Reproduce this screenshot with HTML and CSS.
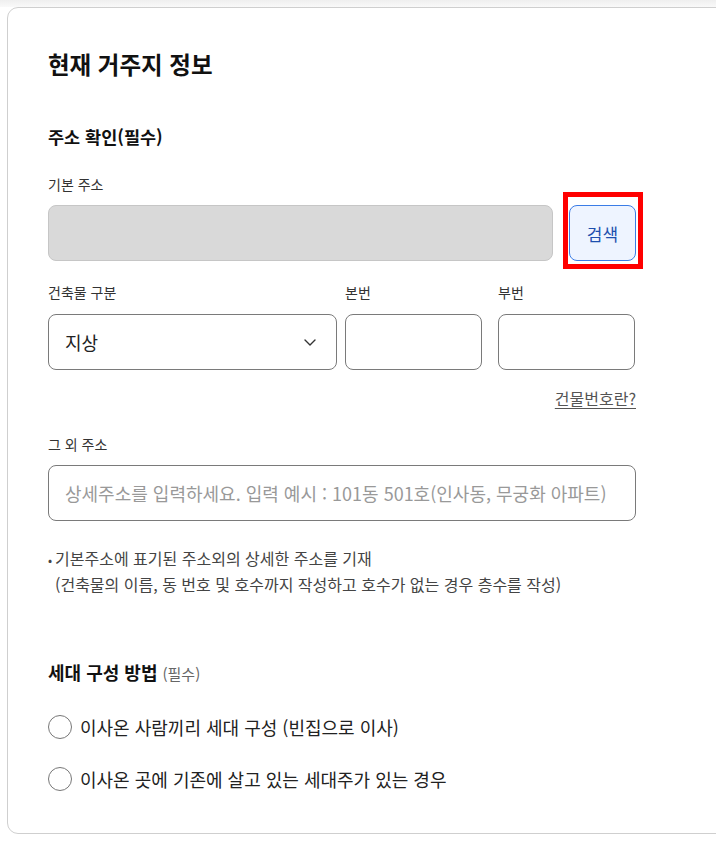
FILE: index.html
```html
<!DOCTYPE html>
<html lang="ko">
<head>
<meta charset="utf-8">
<title>현재 거주지 정보</title>
<link rel="stylesheet" href="styles.css">
</head>
<body>
<div class="page">
  <section class="card">
    <h1 class="title">현재 거주지 정보</h1>

    <h2 class="section-title">주소 확인(필수)</h2>

    <div class="field">
      <div class="label">기본 주소</div>
      <div class="addr-row">
        <div class="input input-disabled"></div>
        <div class="btn-wrap">
          <button class="btn-search" type="button">검색</button>
          <span class="highlight"></span>
        </div>
      </div>
    </div>

    <div class="field-row">
      <div class="col col-type">
        <div class="label">건축물 구분</div>
        <div class="input select">
          <span>지상</span>
          <svg class="chev" width="12" height="7" viewBox="0 0 12 7"><path d="M1 1l5 5 5-5" fill="none" stroke="#333" stroke-width="1.4" stroke-linecap="round" stroke-linejoin="round"/></svg>
        </div>
      </div>
      <div class="col col-num">
        <div class="label">본번</div>
        <div class="input"></div>
      </div>
      <div class="col col-num col-sub">
        <div class="label">부번</div>
        <div class="input"></div>
      </div>
    </div>

    <div class="link-row"><a class="help-link" href="#">건물번호란?</a></div>

    <div class="field">
      <div class="label">그 외 주소</div>
      <div class="input input-wide"><span class="placeholder">상세주소를 입력하세요. 입력 예시 : 101동 501호(인사동, 무궁화 아파트)</span></div>
    </div>

    <div class="notes">
      <p class="note"><span class="bullet">•</span>기본주소에 표기된 주소외의 상세한 주소를 기재</p>
      <p class="note note-sub">(건축물의 이름, 동 번호 및 호수까지 작성하고 호수가 없는 경우 층수를 작성)</p>
    </div>

    <h2 class="section-title section-family">세대 구성 방법 <span class="req">(필수)</span></h2>

    <div class="radios">
      <label class="radio"><span class="circle"></span><span>이사온 사람끼리 세대 구성 (빈집으로 이사)</span></label>
      <label class="radio"><span class="circle"></span><span>이사온 곳에 기존에 살고 있는 세대주가 있는 경우</span></label>
    </div>
  </section>
</div>
</body>
</html>
```

FILE: styles.css
```css
html, body {
  margin: 0;
  padding: 0;
  background: #ffffff;
  overflow: hidden;
}

body {
  font-family: "Noto Sans CJK KR", "Noto Sans", sans-serif;
  color: #111;
}

.page {
  padding: 7px 0 0 7px;
  background: linear-gradient(to bottom, #efefef 0, #f9f9f9 7px, #ffffff 7px);
  width: 800px;
}

.card {
  width: 760px;
  box-sizing: border-box;
  border: 1px solid #cfcfcf;
  border-radius: 11px;
  background: #fff;
  padding: 38px 0 42px 40px;
}

.title {
  margin: 0;
  font-size: 23.5px;
  line-height: 36px;
  font-weight: 700;
  color: #111;
}

.section-title {
  margin: 42px 0 0;
  font-size: 17.5px;
  line-height: 26px;
  font-weight: 700;
  color: #111;
}

.field {
  width: 588px;
  margin-top: 24px;
}

.label {
  font-size: 14px;
  line-height: 21px;
  color: #333;
  margin-bottom: 10px;
}

.addr-row {
  display: flex;
  gap: 16px;
}

.input {
  height: 56px;
  box-sizing: border-box;
  border: 1px solid #7a7a7a;
  border-radius: 8px;
  background: #fff;
}

.input-disabled {
  flex: 1;
  background: #d9d9d9;
  border-color: #c6c6c6;
}

.btn-wrap {
  position: relative;
  width: 67px;
}

.btn-search {
  width: 67px;
  height: 56px;
  box-sizing: border-box;
  border: 1px solid #3a7ce6;
  border-radius: 8px;
  background: #eef4ff;
  color: #1d4fae;
  font-family: inherit;
  font-size: 17px;
  padding: 0;
}

.highlight {
  position: absolute;
  left: -6px;
  top: -13px;
  width: 80px;
  height: 77px;
  box-sizing: border-box;
  border: 5px solid #ff0000;
}

.field-row {
  display: flex;
  width: 588px;
  margin-top: 21px;
}

.col-type {
  width: 289px;
}

.col-num {
  width: 137px;
  margin-left: 8px;
}

.col-sub {
  margin-left: 16px;
}

.field-row .label {
  margin-bottom: 11px;
}

.select {
  display: flex;
  align-items: center;
  justify-content: space-between;
  padding: 0 20px 0 16px;
  font-size: 18px;
  color: #222;
}

.chev {
  display: block;
}

.link-row {
  width: 588px;
  display: flex;
  justify-content: flex-end;
  margin-top: 17px;
}

.help-link {
  font-size: 16px;
  line-height: 22px;
  color: #555;
  text-decoration: underline;
  text-underline-offset: 3px;
}

.link-row + .field {
  margin-top: 25px;
}

.input-wide {
  display: flex;
  align-items: center;
  padding: 0 16px;
}

.placeholder {
  font-size: 18px;
  color: #999;
  white-space: nowrap;
}

.notes {
  margin-top: 25px;
}

.note {
  margin: 0;
  font-size: 16px;
  line-height: 24px;
  color: #444;
}

.bullet {
  display: inline-block;
  width: 7px;
  font-size: 12px;
}

.note-sub {
  padding-left: 7px;
}

.section-family {
  margin-top: 63px;
  font-size: 18px;
}

.req {
  font-size: 15px;
  font-weight: 400;
  color: #666;
}

.radios {
  margin-top: 28px;
  display: flex;
  flex-direction: column;
  gap: 28px;
}

.radio {
  display: flex;
  align-items: center;
  gap: 8px;
  height: 24px;
  font-size: 18px;
  color: #222;
}

.circle {
  width: 24px;
  height: 24px;
  box-sizing: border-box;
  border: 1.3px solid #777;
  border-radius: 50%;
  background: #fff;
}
```
